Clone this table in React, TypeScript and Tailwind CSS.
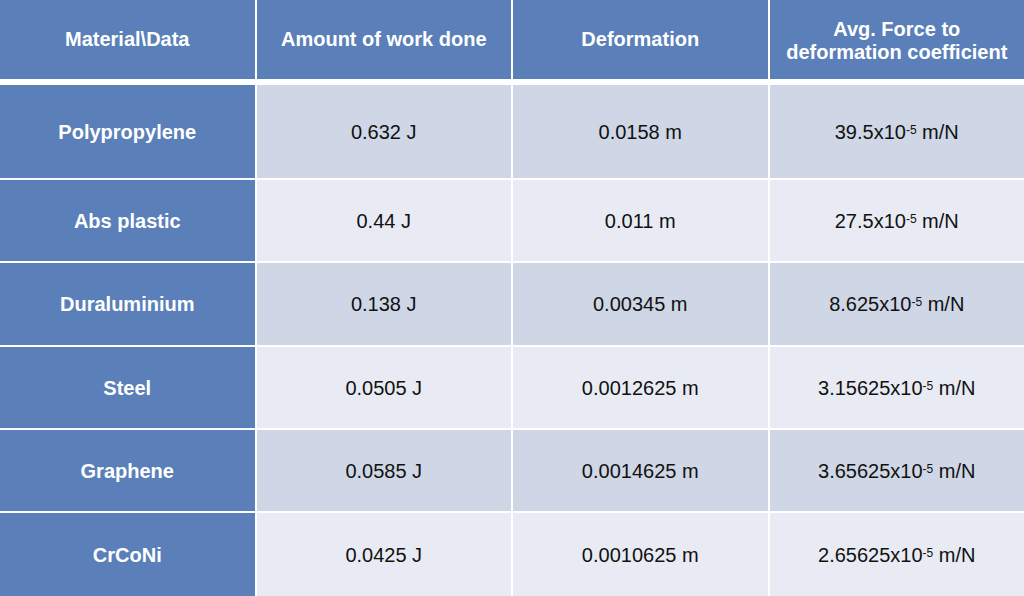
const headers = [
  "Material\\Data",
  "Amount of work done",
  "Deformation",
  "Avg. Force to deformation coefficient",
];

const rows = [
  { name: "Polypropylene", work: "0.632 J", def: "0.0158 m", coef: "39.5", h: "h-[93px]", dark: true },
  { name: "Abs plastic", work: "0.44 J", def: "0.011 m", coef: "27.5", h: "h-[81px]", dark: false },
  { name: "Duraluminium", work: "0.138 J", def: "0.00345 m", coef: "8.625", h: "h-[82px]", dark: true },
  { name: "Steel", work: "0.0505 J", def: "0.0012625 m", coef: "3.15625", h: "h-[81px]", dark: false },
  { name: "Graphene", work: "0.0585 J", def: "0.0014625 m", coef: "3.65625", h: "h-[81px]", dark: true },
  { name: "CrCoNi", work: "0.0425 J", def: "0.0010625 m", coef: "2.65625", h: "h-[83px]", dark: false },
];

const Coef = ({ value }: { value: string }) => (
  <span>
    {value}x10
    <span className="relative -top-[5px] text-[12px] align-baseline">-5</span> m/N
  </span>
);

export default function App() {
  return (
    <div className="w-[1024px] h-[596px] bg-white overflow-hidden font-['Liberation_Sans',Arial,sans-serif]">
      <div className="grid grid-cols-4 gap-x-[2px] h-[79px]">
        {headers.map((h, i) => (
          <div
            key={h}
            className="bg-[#5a7fb9] text-white font-bold text-[20px] leading-[23px] flex items-center justify-center text-center"
          >
            {i === 3 ? (
              <span className="pt-[3px]">
                Avg. Force to
                <br />
                deformation coefficient
              </span>
            ) : (
              h
            )}
          </div>
        ))}
      </div>

      <div className="mt-[6px] flex flex-col gap-y-[2px]">
        {rows.map((r) => {
          const cell = r.dark ? "bg-[#cfd6e5]" : "bg-[#e8ebf3]";
          return (
            <div key={r.name} className={`grid grid-cols-4 gap-x-[2px] ${r.h}`}>
              <div className="bg-[#5a7fb9] text-white font-bold text-[20px] flex items-center justify-center">
                {r.name}
              </div>
              <div className={`${cell} text-[#111] text-[20px] flex items-center justify-center`}>
                {r.work}
              </div>
              <div className={`${cell} text-[#111] text-[20px] flex items-center justify-center`}>
                {r.def}
              </div>
              <div className={`${cell} text-[#111] text-[20px] flex items-center justify-center`}>
                <Coef value={r.coef} />
              </div>
            </div>
          );
        })}
      </div>
    </div>
  );
}
